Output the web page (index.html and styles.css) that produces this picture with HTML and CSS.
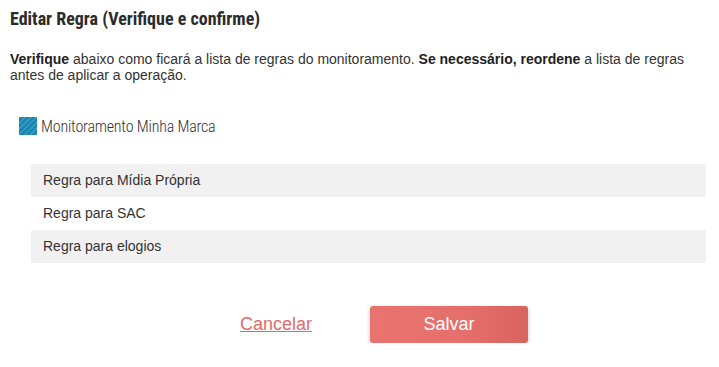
FILE: index.html
```html
<!DOCTYPE html>
<html lang="pt-BR">
<head>
<meta charset="utf-8">
<link rel="stylesheet" href="styles.css">
</head>
<body>
<div class="dialog">
  <h1 class="title">Editar Regra (Verifique e confirme)</h1>
  <p class="intro"><strong>Verifique</strong> abaixo como ficará a lista de regras do monitoramento. <strong>Se necessário, reordene</strong> a lista de regras antes de aplicar a operação.</p>
  <div class="monitor">
    <svg class="monitor-icon" width="18" height="18" viewBox="0 0 18 18">
      <defs>
        <pattern id="stripes" width="4" height="4" patternUnits="userSpaceOnUse" patternTransform="rotate(45)">
          <rect width="4" height="4" fill="#1786b1"/>
          <rect width="1" height="4" fill="#4aa6c9"/>
        </pattern>
      </defs>
      <rect width="18" height="18" fill="url(#stripes)"/>
    </svg>
    <span class="monitor-name">Monitoramento Minha Marca</span>
  </div>
  <ul class="rules">
    <li class="rule alt">Regra para Mídia Própria</li>
    <li class="rule">Regra para SAC</li>
    <li class="rule alt">Regra para elogios</li>
  </ul>
  <div class="actions">
    <a class="cancel" href="#">Cancelar</a>
    <button class="save" type="button">Salvar</button>
  </div>
</div>
</body>
</html>
```
FILE: styles.css
```css
html, body {
  margin: 0;
  padding: 0;
  background: #fff;
}
body {
  font-family: "Liberation Sans", Arial, sans-serif;
  color: #333;
}
.dialog {
  padding: 8px 13px 0 10px;
}
.title {
  margin: 0;
  font-family: "Liberation Sans Narrow", "Roboto Condensed", Roboto, sans-serif;
  font-weight: 700;
  font-size: 18px;
  line-height: 22px;
  color: #2b2b2b;
}
.intro {
  margin: 21px 0 0;
  font-size: 14px;
  line-height: 16px;
  color: #333;
}
.intro strong {
  color: #222;
}
.monitor {
  display: flex;
  align-items: center;
  gap: 4px;
  margin: 34px 0 0 9px;
  height: 18px;
}
.monitor-icon {
  display: block;
  flex: none;
}
.monitor-name {
  font-family: "Roboto Condensed", "Liberation Sans Narrow", Roboto, sans-serif;
  font-weight: 300;
  font-size: 16px;
  letter-spacing: -0.2px;
  color: #333;
}
.rules {
  list-style: none;
  margin: 29px 0 0 21px;
  padding: 0;
}
.rule {
  height: 33px;
  line-height: 33px;
  padding-left: 12px;
  font-size: 14px;
  color: #333;
  border-radius: 2px;
}
.rule.alt {
  background: #f1f1f1;
}
.actions {
  display: flex;
  align-items: center;
  gap: 58px;
  margin-top: 43px;
  padding-left: 230px;
}
.cancel {
  font-size: 18px;
  color: #e06b6b;
  text-decoration: underline;
}
.save {
  width: 158px;
  height: 37px;
  border: 0;
  border-radius: 3px;
  background: linear-gradient(90deg, #e8736f 0%, #e46f6b 60%, #d9645f 100%);
  color: #fff;
  font-family: "Liberation Sans", Arial, sans-serif;
  font-size: 18px;
  box-shadow: 0 2px 4px rgba(0, 0, 0, 0.25);
  cursor: pointer;
}
```
